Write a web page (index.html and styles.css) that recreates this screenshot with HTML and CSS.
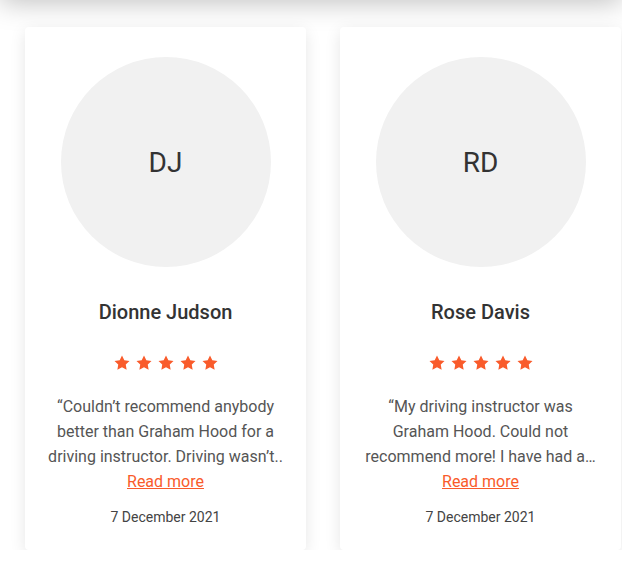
FILE: index.html
```html
<!DOCTYPE html>
<html>
<head>
  <title>Reviews</title>
  <link rel="stylesheet" href="styles.css">
</head>
<body>
  <div class="site-header"></div>

  <div class="reviews">
    <div class="review-card">
      <div class="avatar">DJ</div>
      <h3 class="reviewer">Dionne Judson</h3>
      <div class="stars">
        <svg viewBox="0 0 24 24"><path d="M12 2l3.09 6.26L22 9.27l-5 4.87 1.18 6.88L12 17.77l-6.18 3.25L7 14.14 2 9.27l6.91-1.01L12 2z"/></svg>
        <svg viewBox="0 0 24 24"><path d="M12 2l3.09 6.26L22 9.27l-5 4.87 1.18 6.88L12 17.77l-6.18 3.25L7 14.14 2 9.27l6.91-1.01L12 2z"/></svg>
        <svg viewBox="0 0 24 24"><path d="M12 2l3.09 6.26L22 9.27l-5 4.87 1.18 6.88L12 17.77l-6.18 3.25L7 14.14 2 9.27l6.91-1.01L12 2z"/></svg>
        <svg viewBox="0 0 24 24"><path d="M12 2l3.09 6.26L22 9.27l-5 4.87 1.18 6.88L12 17.77l-6.18 3.25L7 14.14 2 9.27l6.91-1.01L12 2z"/></svg>
        <svg viewBox="0 0 24 24"><path d="M12 2l3.09 6.26L22 9.27l-5 4.87 1.18 6.88L12 17.77l-6.18 3.25L7 14.14 2 9.27l6.91-1.01L12 2z"/></svg>
      </div>
      <p class="excerpt">“Couldn’t recommend anybody better than Graham Hood for a driving instructor. Driving wasn’t..</p>
      <a class="read-more" href="#">Read more</a>
      <div class="date">7 December 2021</div>
    </div>

    <div class="review-card">
      <div class="avatar">RD</div>
      <h3 class="reviewer">Rose Davis</h3>
      <div class="stars">
        <svg viewBox="0 0 24 24"><path d="M12 2l3.09 6.26L22 9.27l-5 4.87 1.18 6.88L12 17.77l-6.18 3.25L7 14.14 2 9.27l6.91-1.01L12 2z"/></svg>
        <svg viewBox="0 0 24 24"><path d="M12 2l3.09 6.26L22 9.27l-5 4.87 1.18 6.88L12 17.77l-6.18 3.25L7 14.14 2 9.27l6.91-1.01L12 2z"/></svg>
        <svg viewBox="0 0 24 24"><path d="M12 2l3.09 6.26L22 9.27l-5 4.87 1.18 6.88L12 17.77l-6.18 3.25L7 14.14 2 9.27l6.91-1.01L12 2z"/></svg>
        <svg viewBox="0 0 24 24"><path d="M12 2l3.09 6.26L22 9.27l-5 4.87 1.18 6.88L12 17.77l-6.18 3.25L7 14.14 2 9.27l6.91-1.01L12 2z"/></svg>
        <svg viewBox="0 0 24 24"><path d="M12 2l3.09 6.26L22 9.27l-5 4.87 1.18 6.88L12 17.77l-6.18 3.25L7 14.14 2 9.27l6.91-1.01L12 2z"/></svg>
      </div>
      <p class="excerpt">“My driving instructor was Graham Hood. Could not recommend more! I have had a…</p>
      <a class="read-more" href="#">Read more</a>
      <div class="date">7 December 2021</div>
    </div>
  </div>
</body>
</html>
```

FILE: styles.css
```css
body {
  margin: 0;
  font-family: Roboto, "Liberation Sans", sans-serif;
  background-color: #ffffff;
  overflow: hidden;
}

/* header sits just above the view, only its shadow shows */
.site-header {
  height: 80px;
  margin-top: -80px;
  background-color: #ffffff;
  box-shadow: 0 2px 28px rgba(0, 0, 0, 0.26);
}

.reviews {
  display: flex;
  gap: 34px;
  padding: 27px 0 0 25px;
}

.review-card {
  flex: 0 0 281px;
  box-sizing: border-box;
  height: 523px;
  padding: 30px 20px 0;
  background-color: #ffffff;
  border-radius: 4px;
  box-shadow: 0 4px 16px rgba(0, 0, 0, 0.1);
  text-align: center;
}

.avatar {
  width: 210px;
  height: 210px;
  margin: 0 auto;
  border-radius: 50%;
  background-color: #f1f1f1;
  color: #333;
  font-size: 28px;
  display: flex;
  align-items: center;
  justify-content: center;
}

.reviewer {
  margin: 33px 0 0;
  font-size: 20px;
  line-height: 24px;
  font-weight: 500;
  color: #333;
}

.stars {
  display: flex;
  justify-content: center;
  gap: 4px;
  margin-top: 30px;
}

.stars svg {
  width: 18px;
  height: 18px;
  fill: #f95b2b;
}

.excerpt {
  margin: 22px 0 0;
  font-size: 16px;
  line-height: 25px;
  color: #555;
}

.read-more {
  display: inline-block;
  font-size: 16px;
  line-height: 25px;
  color: #f95b2b;
}

.date {
  margin-top: 13px;
  font-size: 14px;
  line-height: 20px;
  color: #444;
}
```
